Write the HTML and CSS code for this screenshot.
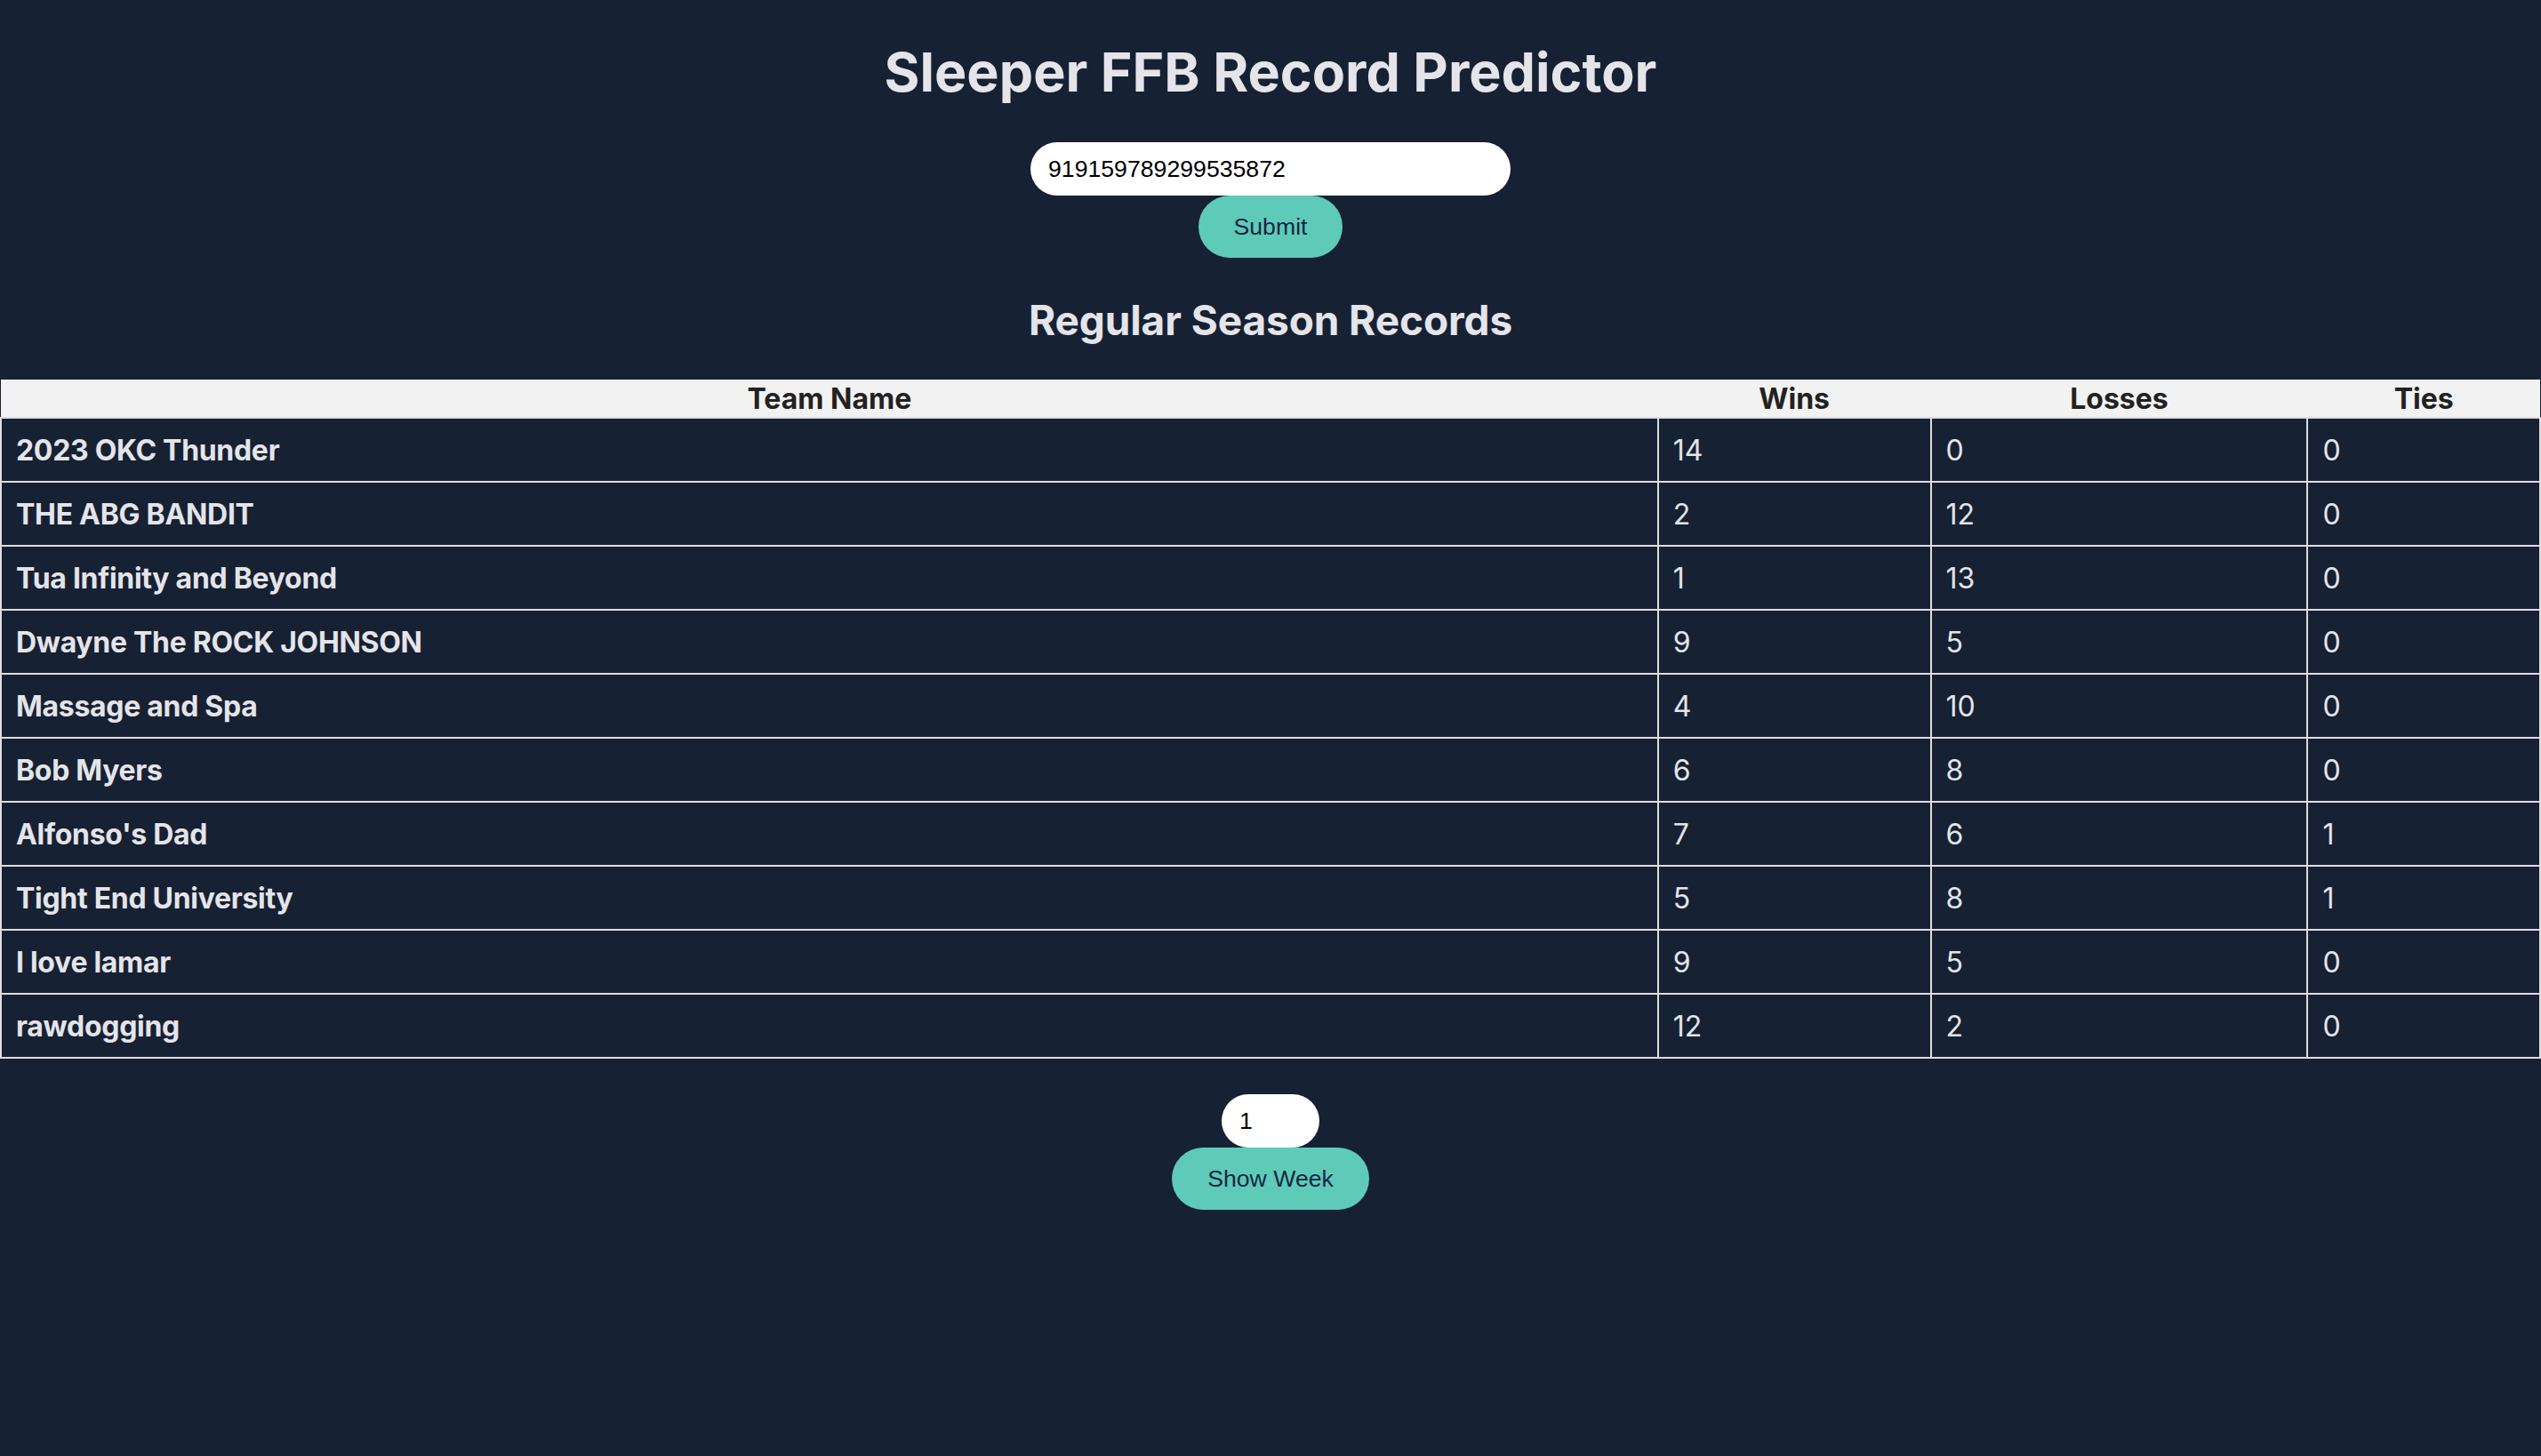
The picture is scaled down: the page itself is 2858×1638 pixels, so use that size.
FILE: index.html
```html
<!DOCTYPE html>
<html lang="en">
<head>
<meta charset="utf-8">
<title>Sleeper FFB Record Predictor</title>
<link rel="stylesheet" href="styles.css">
</head>
<body>
  <h1 class="title">Sleeper FFB Record Predictor</h1>
  <form class="stack">
    <input class="field field-league" type="text" value="919159789299535872">
    <button class="pill" type="button">Submit</button>
  </form>
  <h2 class="subtitle">Regular Season Records</h2>
  <table class="records">
    <thead>
      <tr>
        <th class="c-name">Team Name</th>
        <th class="c-wins">Wins</th>
        <th class="c-losses">Losses</th>
        <th class="c-ties">Ties</th>
      </tr>
    </thead>
    <tbody>
      <tr><td class="team">2023 OKC Thunder</td><td>14</td><td>0</td><td>0</td></tr>
      <tr><td class="team">THE ABG BANDIT</td><td>2</td><td>12</td><td>0</td></tr>
      <tr><td class="team">Tua Infinity and Beyond</td><td>1</td><td>13</td><td>0</td></tr>
      <tr><td class="team">Dwayne The ROCK JOHNSON</td><td>9</td><td>5</td><td>0</td></tr>
      <tr><td class="team">Massage and Spa</td><td>4</td><td>10</td><td>0</td></tr>
      <tr><td class="team">Bob Myers</td><td>6</td><td>8</td><td>0</td></tr>
      <tr><td class="team">Alfonso's Dad</td><td>7</td><td>6</td><td>1</td></tr>
      <tr><td class="team">Tight End University</td><td>5</td><td>8</td><td>1</td></tr>
      <tr><td class="team">I love lamar</td><td>9</td><td>5</td><td>0</td></tr>
      <tr><td class="team">rawdogging</td><td>12</td><td>2</td><td>0</td></tr>
    </tbody>
  </table>
  <form class="stack stack-week">
    <input class="field field-week" type="text" value="1">
    <button class="pill" type="button">Show Week</button>
  </form>
</body>
</html>
```

FILE: styles.css
```css
html {
  background: #162133;
}

body {
  margin: 0;
  background: #162133;
  color: #e4e4e9;
  font-family: Inter, "Noto Sans", sans-serif;
}

.title {
  margin: 44px 0 0;
  font-size: 61px;
  line-height: 74px;
  font-weight: 700;
  text-align: center;
  letter-spacing: 0;
  color: #e4e4e9;
}

.stack {
  display: flex;
  flex-direction: column;
  align-items: center;
  margin: 42px 0 0;
}

.field {
  box-sizing: border-box;
  height: 60px;
  border: none;
  border-radius: 30px;
  padding: 0 20px;
  background: #ffffff;
  color: #000000;
  font-family: "Liberation Sans", Arial, sans-serif;
  font-size: 26.67px;
  outline: none;
}

.field-league {
  width: 540px;
}

.field-week {
  width: 110px;
}

.pill {
  box-sizing: border-box;
  height: 70px;
  border: none;
  border-radius: 35px;
  padding: 0 40px;
  background: #5ecbb8;
  color: #142642;
  font-family: "Liberation Sans", Arial, sans-serif;
  font-size: 26.67px;
  cursor: pointer;
}

.subtitle {
  margin: 42px 0 0;
  font-size: 46px;
  line-height: 56px;
  font-weight: 700;
  text-align: center;
  letter-spacing: -0.1px;
  color: #e4e4e9;
}

.records {
  width: 100%;
  margin-top: 39px;
  border-collapse: collapse;
  table-layout: fixed;
}

.records th {
  background: #f2f2f2;
  color: #222222;
  font-size: 32px;
  font-weight: 700;
  line-height: 40px;
  padding: 2px 0 0;
  text-align: center;
  border: none;
  border-bottom: 2px solid #dedede;
}

.c-name { width: 65.26%; }
.c-wins { width: 10.74%; }
.c-losses { width: 14.84%; }
.c-ties { width: 9.16%; }

.records td {
  border: 2px solid #dedede;
  padding: 17px 16px 15px;
  font-size: 32px;
  line-height: 38px;
  font-weight: 400;
  text-align: left;
  color: #e4e4e9;
}

.records td.team {
  font-weight: 700;
  letter-spacing: -0.3px;
}

.stack-week {
  margin-top: 40px;
}
```
